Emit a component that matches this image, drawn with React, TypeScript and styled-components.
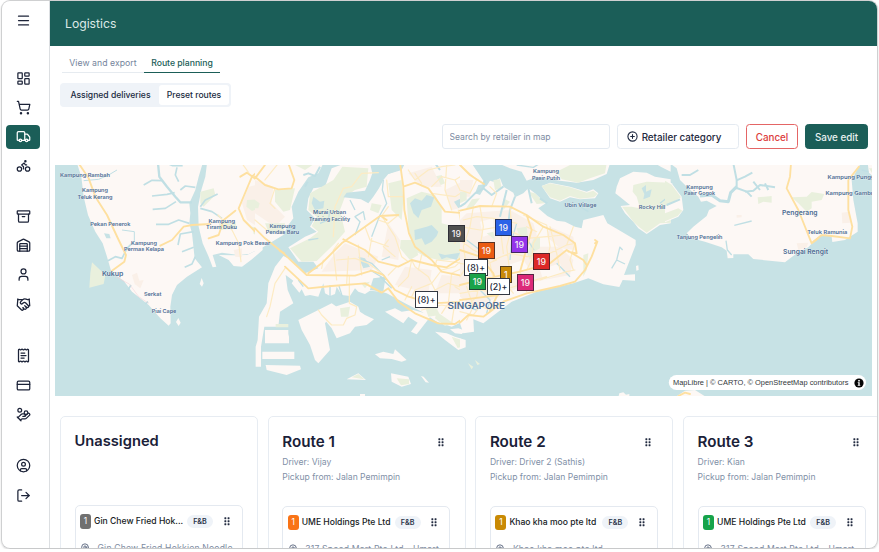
import React from "react";
import styled, { createGlobalStyle, css } from "styled-components";
import {
  Menu, LayoutDashboard, ShoppingCart, Truck, Bike, Archive, Warehouse, User, Handshake,
  ReceiptText, CreditCard, HandCoins, CircleUser, LogOut, CirclePlus, MapPin,
} from "lucide-react";

const Global = createGlobalStyle`
  * { box-sizing: border-box; }
  body { margin: 0; background: #fff; font-family: Inter, "Liberation Sans", sans-serif; color: #1a2238; }
  button, input { font-family: inherit; margin: 0; }
`;

const GREEN = "#1b5e58";

const Window = styled.div`
  width: 877px;
  height: 549px;
  margin-left: 1px;
  display: flex;
  overflow: hidden;
  border: 1px solid #cfd0d1;
  border-bottom-color: #c8c9ca;
  border-radius: 9px;
  box-shadow: 0 1px 2px rgba(0, 0, 0, 0.16);
`;

const Sidebar = styled.nav`
  width: 48px;
  flex: none;
  border-right: 1px solid #dcdfe2;
  display: flex;
  flex-direction: column;
  padding: 7px 0 0 4px;
`;

const NavGroup = styled.div<{ $gap: number }>`
  display: flex;
  flex-direction: column;
  gap: 5.3px;
  margin-bottom: ${(p) => p.$gap}px;
`;

const NavItem = styled.a<{ $active?: boolean }>`
  width: 34px;
  height: 24px;
  border-radius: 4px;
  display: flex;
  align-items: center;
  justify-content: center;
  color: ${(p) => (p.$active ? "#fff" : "#1c2338")};
  background: ${(p) => (p.$active ? GREEN : "transparent")};
`;

const Main = styled.main`
  flex: 1;
  min-width: 0;
  display: flex;
  flex-direction: column;
`;

const Header = styled.header`
  height: 45px;
  flex: none;
  padding-left: 15px;
  display: flex;
  align-items: center;
  background: ${GREEN};
  color: #dce9e7;
  font-size: 12.2px;
`;

const Tabs = styled.div`
  display: flex;
  margin: 7px 0 0 12px;
  height: 20px;
`;

const Tab = styled.a<{ $active?: boolean }>`
  width: ${(p) => (p.$active ? 76 : 82)}px;
  padding-top: 4px;
  text-align: center;
  font-size: 8.7px;
  line-height: 12px;
  letter-spacing: ${(p) => (p.$active ? "-0.03px" : "0.04px")};
  white-space: nowrap;
  color: ${(p) => (p.$active ? GREEN : "#75849c")};
  font-weight: ${(p) => (p.$active ? 500 : 400)};
  border-bottom: 1px solid ${(p) => (p.$active ? GREEN : "#e6ebf0")};
`;

const Segments = styled.div`
  width: 171px;
  height: 24px;
  margin: 10px 0 0 10px;
  padding: 2px;
  display: flex;
  border-radius: 4px;
  background: #eff3f8;
`;

const Segment = styled.button<{ $active?: boolean }>`
  flex: ${(p) => (p.$active ? "0 0 70px" : "0 0 97px")};
  padding: 0;
  border: 0;
  border-radius: 3px;
  font-size: 8.6px;
  font-weight: 500;
  letter-spacing: -0.02px;
  color: #202a40;
  background: ${(p) => (p.$active ? "#fff" : "transparent")};
`;

const Toolbar = styled.div`
  margin: 17px 9px 0 0;
  height: 25px;
  display: flex;
  justify-content: flex-end;
`;

const Search = styled.input`
  width: 168px;
  margin-right: 7px;
  padding: 0 6.5px;
  border: 1px solid #e4eaf1;
  border-radius: 3px;
  font-size: 8.6px;
  outline: 0;
  &::placeholder { color: #7d8ba2; opacity: 1; }
`;

const Button = styled.button<{ $kind: "outline" | "danger" | "primary" }>`
  display: flex;
  align-items: center;
  justify-content: center;
  gap: 4px;
  padding: 0;
  border-radius: 3.5px;
  font-size: 9.85px;
  font-weight: 500;
  letter-spacing: -0.03px;
  border: 1px solid;
  ${(p) => p.$kind === "outline" && css`
    width: 122px; margin-right: 7px; padding-right: 8px; background: #fff; border-color: #e4eaf1; color: #1f2940;
  `}
  ${(p) => p.$kind === "danger" && css`
    width: 52px; margin-right: 7px; background: #fff; border-color: #e46565; color: #dc3c3c;
  `}
  ${(p) => p.$kind === "primary" && css`
    width: 63px; background: ${GREEN}; border-color: ${GREEN}; color: #e8f1f0;
  `}
`;

const MapFrame = styled.section`
  position: relative;
  flex: none;
  width: 817px;
  height: 231px;
  margin: 16px 0 0 5px;
  overflow: hidden;
  & > svg { display: block; }
`;

const Marker = styled.div<{ $x: number; $y: number; $w: number; $color?: string }>`
  position: absolute;
  left: ${(p) => p.$x - 55}px;
  top: ${(p) => p.$y - 165}px;
  width: ${(p) => p.$w}px;
  height: 17px;
  display: flex;
  align-items: center;
  justify-content: center;
  border: 1px solid ${(p) => (p.$color ? "rgba(35, 35, 45, 0.72)" : "#343842")};
  background: ${(p) => p.$color || "#fff"};
  background-clip: border-box;
  color: ${(p) => (p.$color ? "#f6f1f3" : "#232a3b")};
  font-size: 8.8px;
  font-weight: 500;
  letter-spacing: 0.1px;
  white-space: nowrap;
`;

const Attribution = styled.div`
  position: absolute;
  right: 6px;
  bottom: 6px;
  height: 15px;
  width: 197px;
  padding: 0 2px 0 4px;
  display: flex;
  align-items: center;
  justify-content: space-between;
  border-radius: 8px;
  background: #fff;
  color: #33383b;
  font: 7.45px "Liberation Sans", sans-serif;
  white-space: nowrap;
  svg { display: block; }
`;

const Board = styled.section`
  flex: 1;
  display: flex;
  gap: 9.7px;
  margin: 20px 0 0 10px;
  overflow: hidden;
`;

const Column = styled.article`
  flex: 0 0 198px;
  height: 180px;
  padding: 14px 14px 0 13.5px;
  border: 1px solid #e7ecf2;
  border-radius: 5px;
`;

const ColumnHead = styled.div<{ $route: boolean }>`
  height: ${(p) => (p.$route ? 75 : 74)}px;
  padding-top: ${(p) => (p.$route ? 1 : 0)}px;
`;

const TitleRow = styled.div`
  display: flex;
  align-items: center;
  justify-content: space-between;
  padding-right: 7px;
  height: 20px;
  margin-bottom: 3px;
`;

const Title = styled.h2<{ $route: boolean }>`
  margin: 0;
  font-size: ${(p) => (p.$route ? 15.2 : 14.7)}px;
  font-weight: 600;
  line-height: 20px;
  color: #1a2138;
`;

const Meta = styled.p`
  margin: 0;
  height: 14.7px;
  line-height: 14.7px;
  font-size: 8.6px;
  color: #8190a7;
  white-space: nowrap;
`;

const Stop = styled.div`
  width: 168px;
  height: 80px;
  border: 1px solid #e4e9f0;
  border-radius: 5px;
  padding: 7.5px 12px 0 4.5px;
`;

const StopRow = styled.div`
  display: flex;
  align-items: center;
  height: 15px;
`;

const StopBadge = styled.span<{ $color: string }>`
  flex: none;
  width: 11px;
  height: 15px;
  margin-right: 3px;
  border-radius: 3px;
  display: flex;
  align-items: center;
  justify-content: center;
  background: ${(p) => p.$color};
  color: #fff;
  font-size: 8.4px;
`;

const StopName = styled.span`
  flex: 1;
  font-size: 8.6px;
  font-weight: 500;
  color: #161b24;
  white-space: nowrap;
`;

const Tag = styled.span`
  flex: none;
  width: 26px;
  height: 13px;
  margin: 0 10.5px 0 0;
  border-radius: 7px;
  display: flex;
  align-items: center;
  justify-content: center;
  background: #eff3f8;
  font-size: 7.2px;
  font-weight: 600;
  color: #2b3549;
`;

const Address = styled.div`
  display: flex;
  align-items: center;
  gap: 7.5px;
  height: 12px;
  margin-top: 13.2px;
  font-size: 8.6px;
  letter-spacing: 0.2px;
  color: #7d8ba2;
  white-space: nowrap;
  svg { flex: none; color: #4b5872; }
`;

const GripIcon = styled.svg`
  flex: none;
  display: block;
`;

function Grip() {
  return (
    <GripIcon width="6" height="9" viewBox="0 0 6 9" fill="#222b40">
      {[0.3, 3.3, 6.3].map((y) => (
        <React.Fragment key={y}>
          <rect x="0.4" y={y} width="1.9" height="1.9" rx="0.4" />
          <rect x="3.6" y={y} width="1.9" height="1.9" rx="0.4" />
        </React.Fragment>
      ))}
    </GripIcon>
  );
}

const Water = styled.path`
  fill: #c7e2e5;
`;
const Land = styled.path`
  fill: #fdf8f5;
`;
const Urban = styled.path`
  fill: #faf0e8;
`;
const Park = styled.path`
  fill: #e9f0dd;
`;
const River = styled.path<{ $w?: number }>`
  fill: none;
  stroke: #c0dfe4;
  stroke-width: ${(p) => p.$w || 5};
  stroke-linejoin: round;
`;
const Road = styled.path<{ $minor?: boolean }>`
  fill: none;
  stroke: ${(p) => (p.$minor ? "#fdebc3" : "#fee0a0")};
  stroke-width: ${(p) => (p.$minor ? 3.6 : 5.6)};
  stroke-linejoin: round;
  stroke-linecap: round;
`;
const Label = styled.text`
  fill: #4d6c92;
  font-family: Inter, sans-serif;
  font-weight: 600;
  text-anchor: middle;
  paint-order: stroke;
  stroke: rgba(255, 255, 255, 0.55);
  stroke-width: 0.7px;
`;

const labels: [string, number, number, number, number?][] = [
  ["Kampung Rambah", 85, 176.5, 50], ["Kampung", 95, 192.3, 26], ["Teluk Kerang", 95, 199.2, 35],
  ["Pekan Penerok", 110.3, 225.6, 40], ["Kampung", 144, 244.5, 26], ["Permas Kelapa", 144, 251.2, 40],
  ["Kukup", 112.7, 276, 21.5, 6.7], ["Serkat", 152.7, 295.8, 17.5], ["Piai Cape", 164, 313, 24.5],
  ["Kampung", 221.8, 222.5, 26.5], ["Tiram Duku", 221.5, 229.3, 31], ["Kampung Pok Besar", 243, 244.5, 54.5],
  ["Murai Urban", 329.6, 213.6, 33], ["Training Facility", 329.6, 220.5, 41], ["Kampung", 282.4, 227.7, 26],
  ["Pendas Baru", 282.4, 234.4, 33.5], ["Kampung", 546, 173.4, 26], ["Pasir Putih", 546, 180, 28],
  ["Ubin Village", 580.5, 206.8, 32], ["Rocky Hill", 652, 209.3, 26.5], ["Kampung", 699.5, 188.5, 26.5],
  ["Pasir Gogok", 699.5, 195, 31], ["Tanjung Pengelih", 699.5, 238.5, 46], ["Pengerang", 799.8, 215.4, 35.5, 6.7],
  ["Teluk Ramunia", 827.2, 234, 40], ["Sungai Rengit", 805.6, 254.2, 45, 6.7],
  ["Kampung Punggai", 853.5, 178.5, 52], ["Kampung Gambut", 851, 195, 51],
  ["SINGAPORE", 476.3, 309, 57.5, 8.8],
];

function SingaporeMap() {
  const tile = (x: number) => `translate(${x} 160) scale(0.33333)`;
  return (
    <svg width="817" height="231" viewBox="55 165 817 231">
      <Water d="M55 165H872V396H55Z" />
      <g transform={tile(52)}>
        <Land d="M75,10 L88,50 L95,110 L108,165 L130,215 L152,250 L165,290 L178,335 L215,362 L240,395 L290,435 L325,475 L350,497 L356,490 L355,440 L360,405 L375,375 L405,350 L450,322 L428,295 L420,220 L412,190 L415,160 L412,130 L430,90 L440,50 L452,10Z" />
        <Land d="M465,10 L460,50 L448,90 L438,140 L440,200 L452,250 L470,290 L482,322 L493,320 L482,285 L510,278 L560,285 L590,282 L632,262 L632,10Z" />
        <Land d="M500,285 L530,300 L545,318 L570,320 L600,298 L632,270 L632,262 L585,285 L545,286Z M443,372 L449,354 L455,370 L450,380Z M372,486 L379,474 L386,488 L380,498Z" />
        <Urban d="M590,80 L632,70 L632,210 L585,180 L570,130Z" />
        <Park d="M120,307 L160,345 L155,372 L112,383 L115,340Z M445,95 L485,85 L490,105 L455,140 L445,130Z M585,120 L615,118 L620,145 L600,153 L583,140Z M500,190 L550,185 L555,205 L505,210Z M600,200 L632,205 L632,230 L605,222Z" />
        <Urban d="M240,345 L255,338 L262,362 L275,360 L265,385 L248,372Z M545,270 L570,265 L570,292 L550,290Z" />
        <River $w={7} d="M318,10 L322,50 L345,80 L370,110 L385,127 L420,127" />
        <River d="M275,75 L300,61 L330,62 M300,108 L345,103 L368,98 M302,148 L340,145 L372,125 M312,193 L350,193 L380,180 L412,190 M345,10 L362,17 L392,17 M375,22 L370,45 L380,65 M430,82 L400,78 L385,90 M425,215 L385,222 L378,255 M425,262 L390,275 M430,290 L420,312 L398,322 M445,140 L460,120 L497,102 M445,145 L480,155 L510,175 M168,302 L190,290 L210,295 L225,265 L245,245 M228,390 L237,375 M280,432 L288,425 M620,165 L632,170" />
        <River $w={3} d="M95,62 L140,58 L170,45 L195,30 M210,210 L247,215 L247,245" />
        <path d="M156,220 L172,222 L176,235 L163,235Z" fill="#c7e2e5" />
        <path d="M190,350 L232,372 L260,410 L290,430" fill="none" stroke="#f3cfd5" strokeWidth="1.5" />
        <Road d="M80,10 L110,55 L130,110 L165,165 L200,240 L222,285 L217,305 L180,332 M325,257 L360,240 L395,200 L420,195 L475,192 M470,235 L500,225 L515,180 L550,152 M632,20 L600,50 L583,90 L560,145 L575,180 L605,210 L632,238 M565,50 L585,38 L615,60 L632,75" />
        <Road $minor d="M498,165 L540,210 L560,250 L567,305 M570,10 L590,38" />
      </g>
      <g transform={tile(255)}>
        <Land d="M0,10 L205,10 L190,40 L160,52 L130,95 L110,140 L115,175 L100,195 L85,225 L60,240 L20,264 L0,275Z" />
        <Urban d="M0,60 L55,80 L50,130 L90,170 L60,200 L0,160Z" />
        <Park d="M60,90 L120,85 L105,150 L85,155 L60,125Z M0,120 L14,130 L10,145 L0,145Z M30,190 L90,190 L85,220 L40,215Z M110,10 L180,10 L150,30Z" />
        <Land d="M230,25 L270,10 L345,10 L372,45 L400,42 L440,30 L450,10 L632,10 L632,480 L590,500 L545,485 L500,455 L450,430 L405,405 L395,400 L380,395 L345,392 L330,402 L310,395 L300,385 L285,408 L260,405 L245,380 L240,402 L225,408 L210,400 L205,370 L190,410 L165,405 L150,408 L140,388 L133,398 L110,370 L115,362 L92,345 L98,390 L115,430 L75,455 L70,500 L28,500 L18,560 L18,620 L2,620 L2,560 L8,540 L12,470 L35,430 L40,370 L60,320 L85,288 L110,300 L150,340 L190,325 L175,305 L130,305 L100,262 L150,230 L185,215 L165,200 L180,175 L155,150 L160,115 L175,85 L210,80Z" />
        <Land d="M30,510H100V522L102,530V550H30Z M22,575H118V597H22Z M32,615 L135,617 L138,628 L95,645 L35,630Z" />
        <Land d="M130,480 L190,450 L230,430 L245,440 L225,470 L210,490 L225,570 L190,610 L180,600 L165,555 L140,510Z M205,475 L240,440 L285,425 L310,440 L315,455 L330,465 L357,478 L335,495 L300,500 L285,520 L245,535 L230,505Z M390,455 L420,445 L440,455 L475,450 L530,465 L485,523 L468,515 L488,488 L460,470 L445,490Z M360,583 L385,575 L415,582 L420,568 L455,600 L440,605 L410,597 L375,595Z M275,658 L310,640 L333,660Z M408,640 L460,650 L468,672 L440,680 L410,665Z M498,648 L506,650 L522,668 L512,667Z M540,515 L575,520 L600,530 L632,540 L632,562 L610,570 L570,540Z M585,508 L610,505 L632,512 L620,522 L600,520Z M315,702H330V712H315Z" />
        <Park d="M165,100 L200,80 L235,60 L262,20 L340,25 L335,80 L300,90 L270,110 L255,150 L270,215 L240,250 L185,303 L140,305 L105,265 L165,235 L190,215 L170,198 L185,170 L160,150Z" />
        <Park d="M455,115 L500,95 L540,105 L560,140 L560,190 L600,200 L615,250 L615,295 L560,302 L510,290 L475,270 L460,200Z M437,240 L475,240 L490,285 L465,300 L435,265Z M400,70 L440,60 L445,120 L440,180 L410,150Z M510,440 L540,435 L555,465 L520,470Z M545,455 L595,490 L570,498 L540,475Z M255,445 L285,440 L280,470 L258,470Z M62,492 H100 V502 H62Z M290,652 L310,642 L328,658Z M425,655 L462,658 L462,672 L438,676Z M590,530 L620,540 L622,560 L608,564Z M318,370 L345,365 L330,385Z M535,50 L560,45 L570,70 L545,80Z M350,130 L380,135 L370,160 L345,150Z M315,290 L345,280 L350,310 L330,325Z" />
        <Urban d="M270,250 L370,290 L350,330 L200,335 L240,280Z M450,320 L530,330 L520,400 L420,375Z M560,345 L632,350 L632,400 L540,400Z M460,40 L530,20 L560,80 L500,80Z M570,90 L632,60 L632,140 L590,150Z M400,190 L435,240 L430,300 L380,290Z" />
        <Water d="M345,10 L435,10 L437,28 L400,42 L385,60 L372,85 L355,110 L340,130 L318,118 L265,112 L275,98 L330,92 L345,60 L352,40Z" />
        <Water d="M465,130 L480,115 L500,122 L515,105 L538,112 L528,140 L500,150 L490,175 L475,160Z M478,210 L515,200 L530,195 L550,215 L545,228 L530,245 L510,255 L500,235 L480,240Z M550,280 L570,285 L615,278 L605,300 L575,292 L560,298Z M597,125 L625,112 L632,130 L610,145Z M175,110 L195,125 L208,122 L205,145 L180,150 L170,130Z M355,355 L392,350 L385,395 L345,390 L350,370Z M310,290 L330,295 L345,320 L325,325Z" />
        <River $w={4} d="M300,225 L315,185 L300,170 L325,155 L330,180 M285,120 L300,150 M385,60 L382,90 L395,130 L375,165 L350,230 M345,330 L395,360 M325,300 L350,310 L390,350 M380,300 L405,290 M195,190 L220,180 L225,150 M160,240 L190,235 M130,360 L145,380 M225,375 V410 M252,378 L262,410 M375,350 L410,385 M632,200 L610,225" />
        <River $w={6} d="M145,45 L160,40 L180,48 L195,20 M150,80 L158,65 M540,10 L555,30" />
        <Road $minor d="M320,40 L290,80 L265,85 L240,140 L235,230 M320,40 L370,38 M0,180 L35,210 M60,85 L45,130 L60,145 M70,10 L30,60 M90,325 L60,370 L45,440 L35,470 M283,350 L283,430 L305,440 L300,465 L275,475 L265,495 L230,495 L200,465 L190,450 M380,168 L420,230 L440,290 L460,305 M250,250 L235,270 L245,360 M200,325 L205,300 M280,290 L275,370 M310,255 L320,345 M330,200 L345,240 L400,260 M245,300 L300,295 L340,310 L380,340 M350,235 L340,290 M370,180 L400,190 L430,165 M400,240 L385,260 L420,290 M425,320 L400,345 M470,300 L480,320 L520,350 L540,390 L530,430 M470,300 L460,350 L430,380 M500,285 L490,330 M560,330 L530,370 L480,390 L470,410 M560,330 L600,320 L632,290 M632,320 L590,340 L580,430 L560,460 M632,385 L580,370 L540,390 M600,425 L590,490 M632,400 L600,380 M450,420 L470,380 M500,450 L560,435 L632,450 M530,100 L600,110 L632,90 M530,80 L560,50 L600,60 L632,40 M460,30 L480,60 L520,30 L560,20 L600,15 M480,40 L500,70 M575,15 L570,90 L590,150 M600,60 L620,100 M445,110 L400,110 L395,60 M400,140 L380,168 M610,150 L620,200 L600,250 M540,320 L545,300 L632,310" />
        <Road d="M435,10 L445,80 L448,150 L462,220 L480,260 L530,300 L560,335 L632,350 M445,80 L480,68 L520,85 L545,120 L570,155 L632,160 M160,340 L200,310 L260,250 L330,200 L375,168 L430,165 M265,238 L330,270 L370,305 L430,320 L470,300 L530,315 L575,322 L632,285 M0,205 L30,235 L80,275 L155,345 L300,347 L350,332 L385,345 L420,390 L460,410 L530,430 L632,425 M90,320 L160,385 L230,378 L330,370 L380,398 L400,385 L430,425 L480,460 L550,490 L600,492 L632,470 M100,10 L118,60 L110,85 L70,88 L30,75 L0,50 M0,55 L30,15 M378,168 L395,180" />
        <Road d="M74,272 L88,280" />
      </g>
      <g transform={tile(460)}>
        <Land d="M115,10 L150,25 L185,35 L200,62 L230,50 L260,55 L300,62 L350,68 L400,60 L440,42 L450,10Z" />
        <Land d="M245,78 L270,68 L330,80 L380,95 L400,88 L415,100 L405,115 L360,118 L330,112 L300,125 L270,115Z" />
        <Land d="M470,80 L480,55 L520,35 L560,38 L585,50 L632,58 L632,190 L600,195 L560,222 L535,205 L520,185 L495,160 L482,138 L510,135 L485,115 L466,100Z" />
        <Land d="M0,10 L35,10 L70,62 L65,85 L80,78 L90,62 L100,65 L120,55 L130,80 L160,98 L165,112 L190,100 L205,85 L225,100 L257,130 L235,145 L262,168 L290,182 L315,185 L345,200 L365,205 L370,180 L430,165 L442,190 L527,240 L527,255 L492,345 L525,343 L525,362 L488,360 L478,381 L430,373 L385,355 L340,370 L230,395 L155,425 L115,455 L70,490 L40,478 L42,515 L10,520 L0,490Z M585,10 L632,10 L632,35 L605,22Z M528,318 L535,316 L536,330 L529,332Z M0,535 L12,545 L10,560 L0,565Z M478,700 L490,697 L498,704 L508,702 V712 H475Z M632,650 L626,668 L632,685Z" />
        <Urban d="M20,160 L150,150 L220,190 L240,260 L300,260 L340,300 L330,345 L200,370 L120,410 L40,440 L0,410 L0,180Z M270,200 L340,230 L345,270 L300,265 L260,230Z M0,60 L40,60 L30,110 L0,110Z" />
        <Land d="M60,185 L100,175 L100,220 L70,230Z M130,320 L190,300 L210,330 L150,350Z M240,330 L300,310 L310,340 L250,360Z" />
        <Park d="M290,35 L330,15 L440,10 L435,40 L390,55 L355,68 L305,58Z M245,78 L270,70 L330,82 L380,98 L400,92 L413,102 L402,112 L360,116 L330,108 L300,122 L270,112Z M520,75 L560,65 L632,68 L632,188 L600,190 L560,218 L538,202 L520,185 L500,158 L486,140 L515,140 L540,145 L530,110 L518,95Z M222,235 L240,230 L240,265 L222,275 L210,300 L200,280Z M170,205 L200,200 L205,240 L185,250Z M205,95 L225,100 L255,130 L230,132Z M100,60 L120,58 L125,85 L105,90Z M370,285 L385,280 L380,330 L370,350Z M0,95 L20,95 L20,120 L0,130Z M130,115 L150,125 L130,150Z M80,220 L100,215 L105,240Z M24,610 L40,620 L35,628Z M45,600 L60,612 L52,615Z M36,118 L60,115 L40,140 L15,150Z" />
        <Water d="M545,85 L558,75 L558,95 L575,88 L570,110 L550,118 L553,102Z M55,75 L80,72 L60,105 L45,100Z" />
        <River $w={6} d="M75,60 L70,85 L45,100 L15,130 L0,140 M70,85 L95,105 L130,80 M140,90 L130,130 L120,170 M165,110 L150,150 L145,190 M205,85 L215,130 M262,130 L240,115" />
        <River $w={4} d="M480,260 L470,300 L455,325 M470,300 L495,312 M480,262 L488,270 M360,140 L385,155 M600,130 L632,105 M290,310 L305,325 L330,350 M170,190 L155,240 L150,300 M20,240 L60,270 L75,310 M60,390 L90,420 L80,460 M110,385 L110,410 M20,440 L50,450 M240,10 L220,22 L170,15 M200,235 L222,270" />
        <Road $minor d="M0,15 L50,60 L30,100 L0,90 M60,140 L70,200 L60,260 L90,310 L100,360 L90,400 M150,140 L155,200 L140,260 L150,340 M250,200 L220,250 L215,300 L200,330 M0,200 L60,210 L120,200 L200,235 L260,230 L310,225 M0,240 L40,270 L100,300 L150,280 L200,290 L270,280 L320,255 L345,250 M190,165 L260,195 L270,260 L260,310 M40,140 L30,200 L10,260 L20,320 L0,350 M60,360 L50,410 L20,440 M180,335 L200,395 M240,360 L320,335 L345,330 M130,360 L160,400 M0,310 L60,320 L110,300 M120,200 L130,280 M270,200 L290,280 L300,330 M320,255 L340,200 M0,440 L50,435 L90,450 M100,360 L130,390 L210,365 L260,350 M0,400 L60,390 L120,400 M20,380 L40,440 L20,480 M90,80 L110,100 L95,140 M345,250 L330,300 L340,330 M10,180 L50,170 L100,175 L170,190 M0,455 L40,465 L60,440 M200,200 L230,215" />
        <Road d="M0,488 L25,465 L70,470 L130,425 L200,400 L300,378 L345,365 L375,330 L395,290 L412,245 M405,250 L412,245 L405,240 M0,375 L80,355 L180,335 L270,310 L320,270 L370,300 L380,315 M0,152 L60,138 L150,140 L200,165 L250,200 L310,225 L345,250 L350,280 L325,275 M0,15 L30,45 L72,72 M0,270 L60,290 L100,340 L115,400 L90,450 M0,420 L40,415 L115,405 M200,165 L215,210 L190,300 L180,335" />
      </g>
      <g transform={tile(665)}>
        <Land d="M15,10 L35,25 L45,60 L70,85 L100,110 L108,125 L125,122 L155,138 L132,150 L125,168 L85,200 L65,220 L80,235 L120,245 L170,262 L185,272 L188,295 L205,294 L205,283 L250,283 L265,297 L360,307 L395,280 L430,262 L455,235 L480,222 L500,230 L502,246 L540,240 L578,215 L578,190 L565,120 L560,60 L582,18 L590,10Z M608,10 H625 V50 L612,38Z" />
        <Land d="M0,58 L20,70 L50,110 L55,150 L40,170 L0,187Z" />
        <Park d="M0,62 L20,74 L48,112 L0,140Z M0,160 L40,145 L52,152 L38,168 L0,184Z M278,112 L320,108 L320,128 L295,125 L280,132Z M380,112 L425,110 L440,96 L478,102 L470,120 L440,125 L440,145 L425,155 L400,130Z M612,25 H625 V45Z" />
        <Urban d="M530,158 L555,155 L557,188 L532,190Z M395,250 L430,248 L425,262 L400,270Z M215,165 L230,165 L230,172 L215,173Z" />
        <River $w={9} d="M105,108 L140,105 L165,122 L190,125 L197,98 L215,80" />
        <River $w={6} d="M215,88 L215,60 L205,10 M215,84 L245,95 L260,110 M240,95 L265,92 L285,75 L330,82 M285,90 L265,65 M310,90 L300,70 M213,62 L240,50 L262,38 M50,45 L75,45 L100,30 M5,135 L45,118" />
        <River $w={4} d="M208,196 L260,183 M183,242 L187,270 L200,285 M590,30 L610,35" />
        <Road d="M378,10 L375,50 L365,85 L400,150 L440,250 L460,235" />
        <Road d="M582,20 L550,60 L550,150 L562,200 L555,235 L500,228 L470,225 L445,245" />
        <Land d="M30,712 L60,692 L90,690 L125,712Z" />
        <Road d="M40,708 L60,698 L75,702" />
      </g>
      {labels.map(([text, x, y, width, size], i) => (
        <Label key={i} x={x} y={y} fontSize={size || 5.4} textLength={width} lengthAdjust="spacingAndGlyphs">
          {text}
        </Label>
      ))}
    </svg>
  );
}

const markers: [string, number, number, number, string?][] = [
  ["19", 448, 225, 17, "#505050"],
  ["19", 495, 219, 17, "#2b62e8"],
  ["19", 478, 242, 17, "#ea5b12"],
  ["19", 511, 236, 17, "#9433ea"],
  ["(8)+", 464, 259, 24],
  ["19", 469, 273, 17, "#1aa34a"],
  ["1", 500, 266, 12, "#c98a08"],
  ["(2)+", 487, 278, 23],
  ["19", 517, 274, 17, "#dc2979"],
  ["19", 533, 253, 17, "#dc2727"],
  ["(8)+", 415, 291, 23],
];

const columns = [
  { title: "Unassigned", color: "#707070", name: "Gin Chew Fried Hok...", address: "Gin Chew Fried Hokkien Noodle" },
  { title: "Route 1", driver: "Vijay", color: "#f97316", name: "UME Holdings Pte Ltd", address: "317 Speed Mart Pte Ltd - Umart" },
  { title: "Route 2", driver: "Driver 2 (Sathis)", color: "#c98a04", name: "Khao kha moo pte ltd", address: "Khao kha moo pte ltd" },
  { title: "Route 3", driver: "Kian", color: "#16a34a", name: "UME Holdings Pte Ltd", address: "317 Speed Mart Pte Ltd - Umart" },
];

const navGroups = [
  { gap: 34, icons: [Menu] },
  { gap: 26.5, icons: [LayoutDashboard, ShoppingCart, Truck, Bike] },
  { gap: 27.5, icons: [Archive, Warehouse, User, Handshake] },
  { gap: 27.5, icons: [ReceiptText, CreditCard, HandCoins] },
  { gap: 0, icons: [CircleUser, LogOut] },
];

export default function App() {
  return (
    <>
      <Global />
      <Window>
        <Sidebar>
          {navGroups.map((group, i) => (
            <NavGroup key={i} $gap={group.gap}>
              {group.icons.map((Icon, j) => (
                <NavItem key={j} $active={Icon === Truck}>
                  <Icon size={15} strokeWidth={2} />
                </NavItem>
              ))}
            </NavGroup>
          ))}
        </Sidebar>
        <Main>
          <Header>Logistics</Header>
          <Tabs>
            <Tab>View and export</Tab>
            <Tab $active>Route planning</Tab>
          </Tabs>
          <Segments>
            <Segment>Assigned deliveries</Segment>
            <Segment $active>Preset routes</Segment>
          </Segments>
          <Toolbar>
            <Search placeholder="Search by retailer in map" />
            <Button $kind="outline"><CirclePlus size={11} strokeWidth={2.4} />Retailer category</Button>
            <Button $kind="danger">Cancel</Button>
            <Button $kind="primary">Save edit</Button>
          </Toolbar>
          <MapFrame>
            <SingaporeMap />
            {markers.map(([text, x, y, w, color], i) => (
              <Marker key={i} $x={x} $y={y} $w={w} $color={color}>{text}</Marker>
            ))}
            <Attribution>
              <span>MapLibre | © CARTO, © OpenStreetMap contributors</span>
              <svg width="10" height="10" viewBox="0 0 10 10">
                <circle cx="5" cy="5" r="4.6" fill="#050505" />
                <path d="M4.2 2H5.8V3.4H4.2Z M3.7 4.2H5.7V7H6.3V7.8H3.7V7H4.3V5H3.7Z" fill="#fff" />
              </svg>
            </Attribution>
          </MapFrame>
          <Board>
            {columns.map((c) => (
              <Column key={c.title}>
                <ColumnHead $route={!!c.driver}>
                  <TitleRow>
                    <Title $route={!!c.driver}>{c.title}</Title>
                    {c.driver && <Grip />}
                  </TitleRow>
                  {c.driver && <Meta>Driver: {c.driver}</Meta>}
                  {c.driver && <Meta>Pickup from: Jalan Pemimpin</Meta>}
                </ColumnHead>
                <Stop>
                  <StopRow>
                    <StopBadge $color={c.color}>1</StopBadge>
                    <StopName>{c.name}</StopName>
                    <Tag>F&amp;B</Tag>
                    <Grip />
                  </StopRow>
                  <Address>
                    <MapPin size={10} />
                    {c.address}
                  </Address>
                </Stop>
              </Column>
            ))}
          </Board>
        </Main>
      </Window>
    </>
  );
}
